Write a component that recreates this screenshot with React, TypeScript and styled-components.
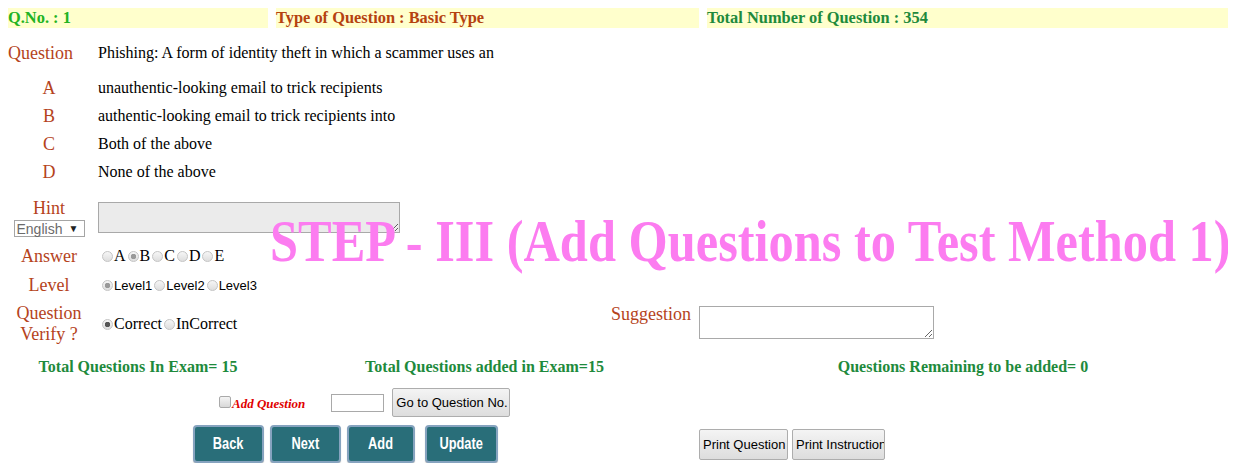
import { ReactNode } from "react";
import { styled, createGlobalStyle } from "styled-components";

const Global = createGlobalStyle`
  body {
    margin: 8px;
    background: #fff;
    font-family: "Liberation Serif", "Times New Roman", serif;
    color: #000;
  }
  * { box-sizing: border-box; }
`;

const Page = styled.div`
  position: relative;
  width: 1220px;
`;

const HeaderBar = styled.div`
  display: grid;
  grid-template-columns: 260px 423px 1fr;
  column-gap: 8px;
  height: 20px;
`;

const HeaderCell = styled.div<{ $color: string }>`
  background: #ffffcc;
  color: ${(p) => p.$color};
  font-weight: bold;
  font-size: 16.4px;
  line-height: 20px;
  white-space: nowrap;
`;

const Row = styled.div<{ $h?: number; $mt?: number }>`
  display: grid;
  grid-template-columns: 82px 1fr;
  column-gap: 8px;
  align-items: center;
  min-height: ${(p) => p.$h ?? 28}px;
  margin-top: ${(p) => p.$mt ?? 0}px;
`;

const VerifyRow = styled(Row)`
  grid-template-columns: 82px 505px 80px 236px;
`;

const Label = styled.div<{ $left?: boolean }>`
  color: #b5431c;
  font-size: 18px;
  line-height: 21px;
  text-align: ${(p) => (p.$left ? "left" : "center")};
  white-space: nowrap;
`;

const Text = styled.div`
  font-size: 16px;
  line-height: 20px;
  white-space: nowrap;
`;

const LabelStack = styled.div`
  display: flex;
  flex-direction: column;
  align-items: center;
  gap: 1px;
`;

const LangSelect = styled.div`
  display: flex;
  align-items: center;
  justify-content: space-between;
  width: 71px;
  height: 17px;
  padding: 0 5px 0 2px;
  border: 1px solid #a5a5a5;
  background: #fff;
  color: #6b6b6b;
  font-family: "Liberation Sans", Arial, sans-serif;
  font-size: 14px;
  span { font-size: 10px; color: #222; }
`;

const Area = styled.textarea<{ $w: number; $h: number; $bg?: string }>`
  width: ${(p) => p.$w}px;
  height: ${(p) => p.$h}px;
  border: 1px solid #a9a9a9;
  background: ${(p) => p.$bg ?? "#fff"};
  margin: 0;
  padding: 2px;
  font-family: "Liberation Sans", Arial, sans-serif;
  font-size: 13px;
`;

const RadioGroup = styled.div<{ $sans?: boolean }>`
  display: flex;
  align-items: center;
  padding-left: 2px;
  font-family: ${(p) =>
    p.$sans ? `"Liberation Sans", Arial, sans-serif` : `"Liberation Serif", serif`};
  font-size: ${(p) => (p.$sans ? 13 : 16)}px;
  white-space: nowrap;
`;

const RadioItem = styled.label`
  display: inline-flex;
  align-items: center;
`;

const RadioDot = styled.input<{ $dark?: boolean }>`
  appearance: none;
  width: 11px;
  height: 11px;
  margin: 0 1px 0 2px;
  border: 1px solid #c4c4c4;
  border-radius: 50%;
  background: linear-gradient(#f6f6f6, #dedede);
  &:checked {
    background: radial-gradient(
        circle,
        ${(p) => (p.$dark ? "#555" : "#999")} 0 2.5px,
        transparent 3px
      ),
      linear-gradient(#f6f6f6, #dedede);
  }
`;

const SuggestLabel = styled(Label)`
  align-self: start;
  text-align: left;
  line-height: 22px;
`;

const SuggestArea = styled(Area)`
  align-self: start;
  margin-top: 3px;
`;

const TotalsRow = styled.div`
  display: grid;
  grid-template-columns: 260px 417px 524px;
  column-gap: 8px;
  margin-top: 12px;
  color: #1e8a3c;
  font-weight: bold;
  font-size: 16px;
  line-height: 20px;
  text-align: center;
  white-space: nowrap;
`;

const Bottom = styled.div`
  display: grid;
  grid-template-columns: 691px 1fr;
  margin-top: 11px;
  row-gap: 8px;
  align-items: center;
`;

const Line = styled.div<{ $pl?: number; $gap?: number }>`
  display: flex;
  align-items: center;
  padding-left: ${(p) => p.$pl ?? 0}px;
  gap: ${(p) => p.$gap ?? 0}px;
`;

const Check = styled.input`
  appearance: none;
  width: 12px;
  height: 12px;
  margin: -2px 1px 0 0;
  border: 1px solid #a9a9a9;
  border-radius: 2px;
  background: linear-gradient(#f4f4f4, #d8d8d8);
`;

const AddLabel = styled.span`
  color: #e00000;
  font-style: italic;
  font-weight: bold;
  font-size: 13px;
  margin-right: 26px;
  margin-top: 3px;
`;

const SmallInput = styled.input`
  width: 53px;
  height: 18px;
  margin: 0 8px 0 0;
  border: 1px solid #a9a9a9;
`;

const GreyButton = styled.button<{ $w: number; $h: number }>`
  width: ${(p) => p.$w}px;
  height: ${(p) => p.$h}px;
  padding: 0 3px;
  border: 1px solid #adadad;
  border-radius: 2px;
  background: linear-gradient(#f4f4f4, #dddddd);
  color: #000;
  font-family: "Liberation Sans", Arial, sans-serif;
  font-size: 13px;
  text-align: left;
  white-space: nowrap;
  overflow: hidden;
`;

const TealButton = styled.button<{ $w: number; $mr?: number }>`
  width: ${(p) => p.$w}px;
  height: 38px;
  margin-right: ${(p) => p.$mr ?? 0}px;
  padding: 0;
  border: 2px solid #86a3bf;
  border-radius: 4px;
  background: #296e79;
  color: #fff;
  font-family: "Liberation Sans", Arial, sans-serif;
  font-weight: bold;
  font-size: 16px;
  box-shadow: 0 1px 1px rgba(0, 0, 0, 0.25);
  span {
    display: inline-block;
    transform: scaleX(0.8);
  }
`;

const Overlay = styled.div`
  position: absolute;
  left: 262px;
  top: 203px;
  color: #fc7cf0;
  font-family: "Liberation Serif", serif;
  font-weight: bold;
  font-size: 60px;
  line-height: 60px;
  white-space: nowrap;
  transform: scaleX(0.84);
  transform-origin: left top;
  pointer-events: none;
`;

const Radio = ({
  name,
  checked,
  dark,
  children,
}: {
  name: string;
  checked?: boolean;
  dark?: boolean;
  children: ReactNode;
}) => (
  <RadioItem>
    <RadioDot type="radio" name={name} defaultChecked={checked} $dark={dark} />
    {children}
  </RadioItem>
);

const options = [
  ["A", "unauthentic-looking email to trick recipients"],
  ["B", "authentic-looking email to trick recipients into"],
  ["C", "Both of the above"],
  ["D", "None of the above"],
];

export default function App() {
  return (
    <Page>
      <Global />
      <HeaderBar>
        <HeaderCell $color="#22b322">Q.No. : 1</HeaderCell>
        <HeaderCell $color="#b5420f">Type of Question : Basic Type</HeaderCell>
        <HeaderCell $color="#1e8a3c">Total Number of Question : 354</HeaderCell>
      </HeaderBar>

      <Row $mt={11}>
        <Label $left>Question</Label>
        <Text>Phishing: A form of identity theft in which a scammer uses an</Text>
      </Row>
      <div style={{ marginTop: 7 }}>
        {options.map(([k, v]) => (
          <Row key={k}>
            <Label>{k}</Label>
            <Text>{v}</Text>
          </Row>
        ))}
      </div>

      <Row $h={41} $mt={11}>
        <LabelStack>
          <Label>Hint</Label>
          <LangSelect>
            English<span>▼</span>
          </LangSelect>
        </LabelStack>
        <Area $w={302} $h={31} $bg="#ebebeb" />
      </Row>

      <Row $mt={4}>
        <Label>Answer</Label>
        <RadioGroup>
          <Radio name="ans">A</Radio>
          <Radio name="ans" checked>B</Radio>
          <Radio name="ans">C</Radio>
          <Radio name="ans">D</Radio>
          <Radio name="ans">E</Radio>
        </RadioGroup>
      </Row>

      <Row $mt={1}>
        <Label>Level</Label>
        <RadioGroup $sans>
          <Radio name="lvl" checked>Level1</Radio>
          <Radio name="lvl">Level2</Radio>
          <Radio name="lvl">Level3</Radio>
        </RadioGroup>
      </Row>

      <VerifyRow $h={42} $mt={4}>
        <Label>
          Question
          <br />
          Verify ?
        </Label>
        <RadioGroup>
          <Radio name="ver" checked dark>Correct</Radio>
          <Radio name="ver">InCorrect</Radio>
        </RadioGroup>
        <SuggestLabel>Suggestion</SuggestLabel>
        <SuggestArea $w={235} $h={33} />
      </VerifyRow>

      <TotalsRow>
        <div>Total Questions In Exam= 15</div>
        <div>Total Questions added in Exam=15</div>
        <div>Questions Remaining to be added= 0</div>
      </TotalsRow>

      <Bottom>
        <Line $pl={211}>
          <Check type="checkbox" />
          <AddLabel>Add Question</AddLabel>
          <SmallInput type="text" />
          <GreyButton $w={118} $h={29}>Go to Question No.</GreyButton>
        </Line>
        <div />
        <Line $pl={185} $gap={6}>
          <TealButton $w={71}><span>Back</span></TealButton>
          <TealButton $w={71}><span>Next</span></TealButton>
          <TealButton $w={68} $mr={4}><span>Add</span></TealButton>
          <TealButton $w={73}><span>Update</span></TealButton>
        </Line>
        <Line $gap={4}>
          <GreyButton $w={89} $h={31}>Print Question</GreyButton>
          <GreyButton $w={93} $h={31}>Print Instruction</GreyButton>
        </Line>
      </Bottom>

      <Overlay>STEP - III (Add Questions to Test Method 1)</Overlay>
    </Page>
  );
}
